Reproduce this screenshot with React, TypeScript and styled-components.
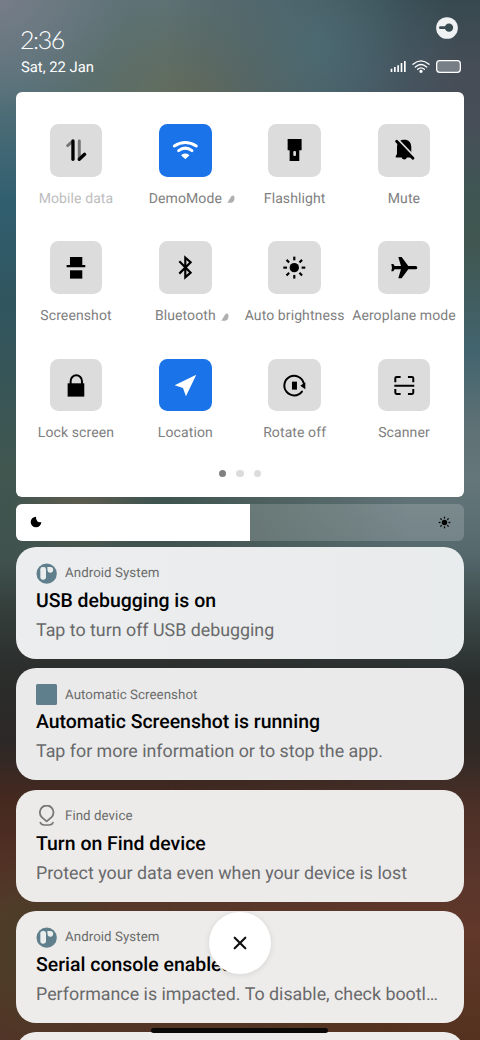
import React from 'react';
import styled, { createGlobalStyle } from 'styled-components';

const GlobalStyle = createGlobalStyle`
  * { box-sizing: border-box; }
  html, body { margin: 0; padding: 0; }
  body {
    font-family: Roboto, "Noto Sans", sans-serif;
    text-rendering: geometricPrecision;
    overflow: hidden;
  }
  svg { display: block; flex: none; }
`;

const Screen = styled.main`
  position: relative;
  isolation: isolate;
  width: 480px;
  height: 1040px;
  overflow: hidden;
  display: flex;
  flex-direction: column;
  padding: 0 16px;
  background:
    radial-gradient(130px 110px at 0 0, #767d88 0%, #767d8800 100%),
    radial-gradient(170px 110px at 190px 100px, #646c5a 0%, #646c5a00 100%),
    radial-gradient(70px 45px at 80px 510px, #605c4e 0%, #605c4e00 100%),
    radial-gradient(90px 100px at 40px 950px, #463f28 0%, #463f2800 100%),
    linear-gradient(180deg, #5d7276 0, #547078 90px, #315f70 200px, #30555f 300px,
      #40564f 470px, #40524e 560px, #343e3b 610px, #2b2e2c 670px, #2c2827 740px,
      #45291f 800px, #502f24 850px, #57382a 910px, #573826 980px, #513427 1040px);

  &::before {
    content: '';
    position: absolute;
    inset: 0;
    z-index: -1;
    background:
      radial-gradient(150px 130px at 310px 50px, #446570 0%, #44657000 100%),
      linear-gradient(180deg, #37494f 0, #464d57 70px, #474e58 120px, #3f5554 190px,
        #40564f 240px, #42646e 350px, #5f7175 430px, #64767a 480px, #566a6e 550px,
        #3a4746 620px, #282c2b 680px, #302925 750px, #4d3027 810px, #58352b 870px,
        #61382a 930px, #54321f 1040px);
    mask-image: linear-gradient(90deg, transparent 35%, #000 85%);
  }
`;

const StatusHeader = styled.header`
  flex: none;
  height: 92px;
  padding: 0 3px 0 5px;
  display: flex;
  justify-content: space-between;
  color: #fff;
`;

const ClockBlock = styled.div`
  padding-top: 25px;
`;

const Clock = styled.div`
  margin-left: -1px;
  font: 300 25px/30px Lato, sans-serif;
  letter-spacing: -1.4px;
`;

const DateLine = styled.div`
  margin-top: 3px;
  font-size: 14.8px;
  line-height: 19px;
`;

const StatusSide = styled.div`
  display: flex;
  flex-direction: column;
  align-items: flex-end;
  padding-top: 17px;
`;

const KeyBadge = styled.div`
  margin-right: 3.5px;
`;

const StatusIcons = styled.div`
  margin-top: 21px;
  display: flex;
  align-items: center;
  gap: 6px;
`;

const Panel = styled.section`
  flex: none;
  height: 405px;
  padding: 32px 5.33px 0;
  border-radius: 6px;
  background: #fff;
`;

const TileGrid = styled.div`
  display: grid;
  grid-template-columns: repeat(4, 109.33px);
  grid-auto-rows: 117.33px;
`;

const Tile = styled.div`
  display: flex;
  flex-direction: column;
  align-items: center;
`;

const TileButton = styled.div<{ $active?: boolean }>`
  width: 52.6px;
  height: 52.6px;
  border-radius: 8.5px;
  background: ${p => (p.$active ? '#1a73e8' : '#dcdcdc')};
  color: ${p => (p.$active ? '#fff' : '#000')};
`;

const TileLabel = styled.div<{ $muted?: boolean }>`
  position: relative;
  margin-top: 12.2px;
  font-size: 14px;
  line-height: 20px;
  letter-spacing: 0.1px;
  white-space: nowrap;
  color: ${p => (p.$muted ? '#bdbdbd' : '#808080')};
`;

const Caret = styled.svg`
  position: absolute;
  left: calc(100% + 5px);
  top: 6.5px;
`;

const Dots = styled.div`
  display: flex;
  justify-content: center;
  gap: 10.6px;
  margin-top: -6px;
`;

const Dot = styled.span<{ $on?: boolean }>`
  width: 7.2px;
  height: 7.2px;
  border-radius: 50%;
  background: ${p => (p.$on ? '#808080' : '#dcdcdc')};
`;

const Slider = styled.div`
  flex: none;
  height: 37px;
  margin-top: 6.5px;
  padding: 0 13px 0 14px;
  display: flex;
  align-items: center;
  justify-content: space-between;
  border-radius: 6px;
  background: linear-gradient(90deg, #fff 234px, rgba(255, 255, 255, 0.17) 234px);
`;

const Notifications = styled.section`
  display: flex;
  flex-direction: column;
  gap: 9.33px;
  margin-top: 6.4px;
`;

const Card = styled.article<{ $tone: string }>`
  flex: none;
  height: 112px;
  padding: 15.4px 20px 0;
  border-radius: 20px;
  background: ${p => p.$tone};
`;

const CardHead = styled.div`
  display: flex;
  align-items: center;
  gap: 8px;
  height: 22px;
  font-size: 13.3px;
  letter-spacing: 0.06px;
  color: #6a6c6c;
`;

const AppName = styled.span`
  padding-top: 1.4px;
`;

const CardTitle = styled.h2`
  margin: 4.8px 0 0;
  font-size: 19.45px;
  font-weight: 500;
  line-height: 24px;
  color: #000;
`;

const CardText = styled.p`
  margin: 6px 0 0;
  font-size: 17.84px;
  line-height: 24px;
  color: #68696a;
  white-space: nowrap;
`;

const CloseButton = styled.div`
  position: absolute;
  left: 209px;
  top: 911.5px;
  width: 62px;
  height: 62px;
  border-radius: 50%;
  background: #fff;
  box-shadow: 0 1px 6px rgba(0, 0, 0, 0.1);
  display: grid;
  place-items: center;
`;

const HomeBar = styled.div`
  position: absolute;
  left: 151px;
  top: 1028px;
  width: 177px;
  height: 4.6px;
  border-radius: 3px;
  background: #0c0a09;
`;

const rays = [0, 45, 90, 135, 180, 225, 270, 315];
const round = { strokeLinecap: 'round', strokeLinejoin: 'round', fill: 'none' } as const;

const glyphs: Record<string, React.ReactNode> = {
  data: (
    <g {...round} strokeWidth="9">
      <path d="M67 53 L53 65" stroke="#777" />
      <path d="M69 51 V106" stroke="#000" strokeWidth="10" />
      <path d="M88 51 V104" stroke="#777" />
      <path d="M88 106 L104 91" stroke="#000" strokeWidth="10" />
    </g>
  ),
  wifi: (
    <g {...round} stroke="currentColor">
      <path d="M46 66 Q79 45 112 66" strokeWidth="9" />
      <path d="M59 80 Q79 65 99 80" strokeWidth="9" />
      <path d="M69 94 Q79 87 89 94 L79 103Z" strokeWidth="4" fill="currentColor" />
    </g>
  ),
  torch: (
    <>
      <path d="M59 45h42v34h-7v32h-29v-32h-6z" />
      <rect x="76" y="81" width="8" height="15" rx="3" fill="#dcdcdc" />
    </>
  ),
  mute: (
    <>
      <path d="M57 70C57 55 66 47 79 47S100 55 100 70V90L106 99Q106 101 103 101H87Q85 107 79 107T71 101H56Q52 101 53 97L57 90Z" />
      <path d="M58 45 L111 100" stroke="#dcdcdc" strokeWidth="6" />
      <path d="M56 52 L105 103" stroke="#000" strokeWidth="8.5" strokeLinecap="round" />
    </>
  ),
  screenshot: (
    <>
      <path d="M60 48h37v24h9v7h-56v-7h10z" />
      <path d="M60 88h37v25h-37z" />
    </>
  ),
  bluetooth: (
    <path d="M61 61 L95 95 L79 109 V50 L95 64 L61 98" fill="none" stroke="#000" strokeWidth="6.5" />
  ),
  sun: (
    <>
      <circle cx="79" cy="80" r="14" />
      {rays.map(a => (
        <path key={a} d="M79 58V47" stroke="#000" strokeWidth="6.5" transform={`rotate(${a} 79 80)`} />
      ))}
    </>
  ),
  plane: (
    <path d="M40 69H46L50 75H69L61 48H71L91 75H113Q118 75 118 80T113 85H91L71 112H61L69 85H50L46 91H40L42 80Z" />
  ),
  lock: (
    <>
      <path d="M53 73h50v40h-50z" />
      <path d="M62 75V66A17 17 0 0 1 96 66V75" fill="none" stroke="#000" strokeWidth="6" />
    </>
  ),
  location: <path d="M112 47 L81 112 L72 87 L47 79Z" />,
  rotate: (
    <>
      <path d="M107 72A29.5 29.5 0 1 0 102 98" fill="none" stroke="#000" strokeWidth="6" strokeLinecap="round" />
      <path d="M97 80L112 70V91Z" />
      <path d="M72 68h15v24h-15z" />
    </>
  ),
  scanner: (
    <g {...round} stroke="#000" strokeWidth="6" strokeLinecap="butt">
      <path d="M52 70V58Q52 54 56 54H68M90 54H102Q106 54 106 58V70M106 90V101Q106 105 102 105H90M68 105H56Q52 105 52 101V90M49 80H109" />
    </g>
  ),
};

const tiles = [
  { icon: 'data', label: 'Mobile data', muted: true },
  { icon: 'wifi', label: 'DemoMode', active: true, more: true },
  { icon: 'torch', label: 'Flashlight' },
  { icon: 'mute', label: 'Mute' },
  { icon: 'screenshot', label: 'Screenshot' },
  { icon: 'bluetooth', label: 'Bluetooth', more: true },
  { icon: 'sun', label: 'Auto brightness' },
  { icon: 'plane', label: 'Aeroplane mode' },
  { icon: 'lock', label: 'Lock screen' },
  { icon: 'location', label: 'Location', active: true },
  { icon: 'rotate', label: 'Rotate off' },
  { icon: 'scanner', label: 'Scanner' },
];

const SystemIcon = () => (
  <svg width="21" height="21" viewBox="0 0 63 63">
    <circle cx="32" cy="32" r="30.5" fill="#5f7f8c" />
    <rect x="13" y="12" width="17" height="38" rx="7" fill="#eceeee" />
    <path d="M34 12H43A8.5 8.5 0 1 1 34.5 21Z" fill="#eceeee" />
  </svg>
);

const SquareIcon = () => (
  <svg width="21" height="21" viewBox="0 0 21 21">
    <rect width="21" height="21" rx="1.5" fill="#5f7f8c" />
  </svg>
);

const FindIcon = () => (
  <svg width="21" height="21" viewBox="0 0 63 63" fill="none" stroke="#777" strokeWidth="5.5">
    <path d="M32 49L18 37A20.5 20.5 0 1 1 46 37Z" strokeLinejoin="round" />
    <path d="M12 51Q15 60 25 60H39Q49 60 52 51" strokeWidth="4.5" />
  </svg>
);

const cards = [
  { icon: <SystemIcon />, app: 'Android System', title: 'USB debugging is on', text: 'Tap to turn off USB debugging', tone: 'linear-gradient(90deg, #ecedee, #e9ecec)' },
  { icon: <SquareIcon />, app: 'Automatic Screenshot', title: 'Automatic Screenshot is running', text: 'Tap for more information or to stop the app.', tone: '#eaeaea' },
  { icon: <FindIcon />, app: 'Find device', title: 'Turn on Find device', text: 'Protect your data even when your device is lost', tone: '#edebea' },
  { icon: <SystemIcon />, app: 'Android System', title: 'Serial console enabled', text: 'Performance is impacted. To disable, check bootl…', tone: '#eeecea' },
];

export default function App() {
  return (
    <>
      <GlobalStyle />
      <Screen>
        <StatusHeader>
          <ClockBlock>
            <Clock>2:36</Clock>
            <DateLine>Sat, 22 Jan</DateLine>
          </ClockBlock>
          <StatusSide>
            <KeyBadge>
              <svg width="22" height="22" viewBox="0 0 66 66">
                <circle cx="33" cy="33" r="32.5" fill="#f0f1f2" />
                <circle cx="39" cy="32" r="12.5" fill="#3a4a51" />
                <path d="M13 32H34" stroke="#3a4a51" strokeWidth="8" strokeLinecap="round" />
              </svg>
            </KeyBadge>
            <StatusIcons>
              <svg width="16" height="13" viewBox="0 0 48 39" fill="#fff">
                <path d="M2 26h5v10h-5zM12 21h5v15h-5zM22 16h5v20h-5zM32 9h5v27h-5zM42 3h5v33h-5z" />
              </svg>
              <svg width="18" height="13" viewBox="0 0 54 39" fill="none" stroke="#fff" strokeWidth="4" strokeLinecap="round">
                <path d="M3 13Q27 -8 51 13M10 21Q27 6 44 21M17 28Q27 19 37 28" />
                <circle cx="27" cy="34" r="3" fill="#fff" />
              </svg>
              <svg width="25" height="13" viewBox="0 0 75 39">
                <rect x="2" y="2" width="71" height="35" rx="9" fill="rgba(255,255,255,.28)" stroke="#fff" strokeWidth="3.8" />
              </svg>
            </StatusIcons>
          </StatusSide>
        </StatusHeader>

        <Panel>
          <TileGrid>
            {tiles.map(t => (
              <Tile key={t.label}>
                <TileButton $active={t.active}>
                  <svg width="52.6" height="52.6" viewBox="0 0 158 158" fill="currentColor">
                    {glyphs[t.icon]}
                  </svg>
                </TileButton>
                <TileLabel $muted={t.muted}>
                  {t.label}
                  {t.more && (
                    <Caret width="8" height="8" viewBox="0 0 24 24">
                      <path d="M1 23L13 4Q20 -2 22 5Q24 20 14 23Z" fill="#b0b0b0" />
                    </Caret>
                  )}
                </TileLabel>
              </Tile>
            ))}
          </TileGrid>
          <Dots>
            <Dot $on />
            <Dot />
            <Dot />
          </Dots>
        </Panel>

        <Slider>
          <svg width="12" height="12" viewBox="0 0 36 36">
            <path d="M18 2A16 16 0 1 0 34 18Q27 20 22 16Q17 11 18 2Z" />
          </svg>
          <svg width="13" height="13" viewBox="0 0 36 36">
            <circle cx="18" cy="18" r="7.5" />
            {rays.map(a => (
              <path key={a} d="M18 7V2" stroke="#000" strokeWidth="3.5" transform={`rotate(${a} 18 18)`} />
            ))}
          </svg>
        </Slider>

        <Notifications>
          {cards.map(c => (
            <Card key={c.title} $tone={c.tone}>
              <CardHead>
                {c.icon}
                <AppName>{c.app}</AppName>
              </CardHead>
              <CardTitle>{c.title}</CardTitle>
              <CardText>{c.text}</CardText>
            </Card>
          ))}
          <Card $tone="#eeecea" />
        </Notifications>

        <CloseButton>
          <svg width="14" height="14" viewBox="0 0 14 14" stroke="#111" strokeWidth="2.2" strokeLinecap="round">
            <path d="M1.7 1.7L12.3 12.3M12.3 1.7L1.7 12.3" />
          </svg>
        </CloseButton>
        <HomeBar />
      </Screen>
    </>
  );
}
